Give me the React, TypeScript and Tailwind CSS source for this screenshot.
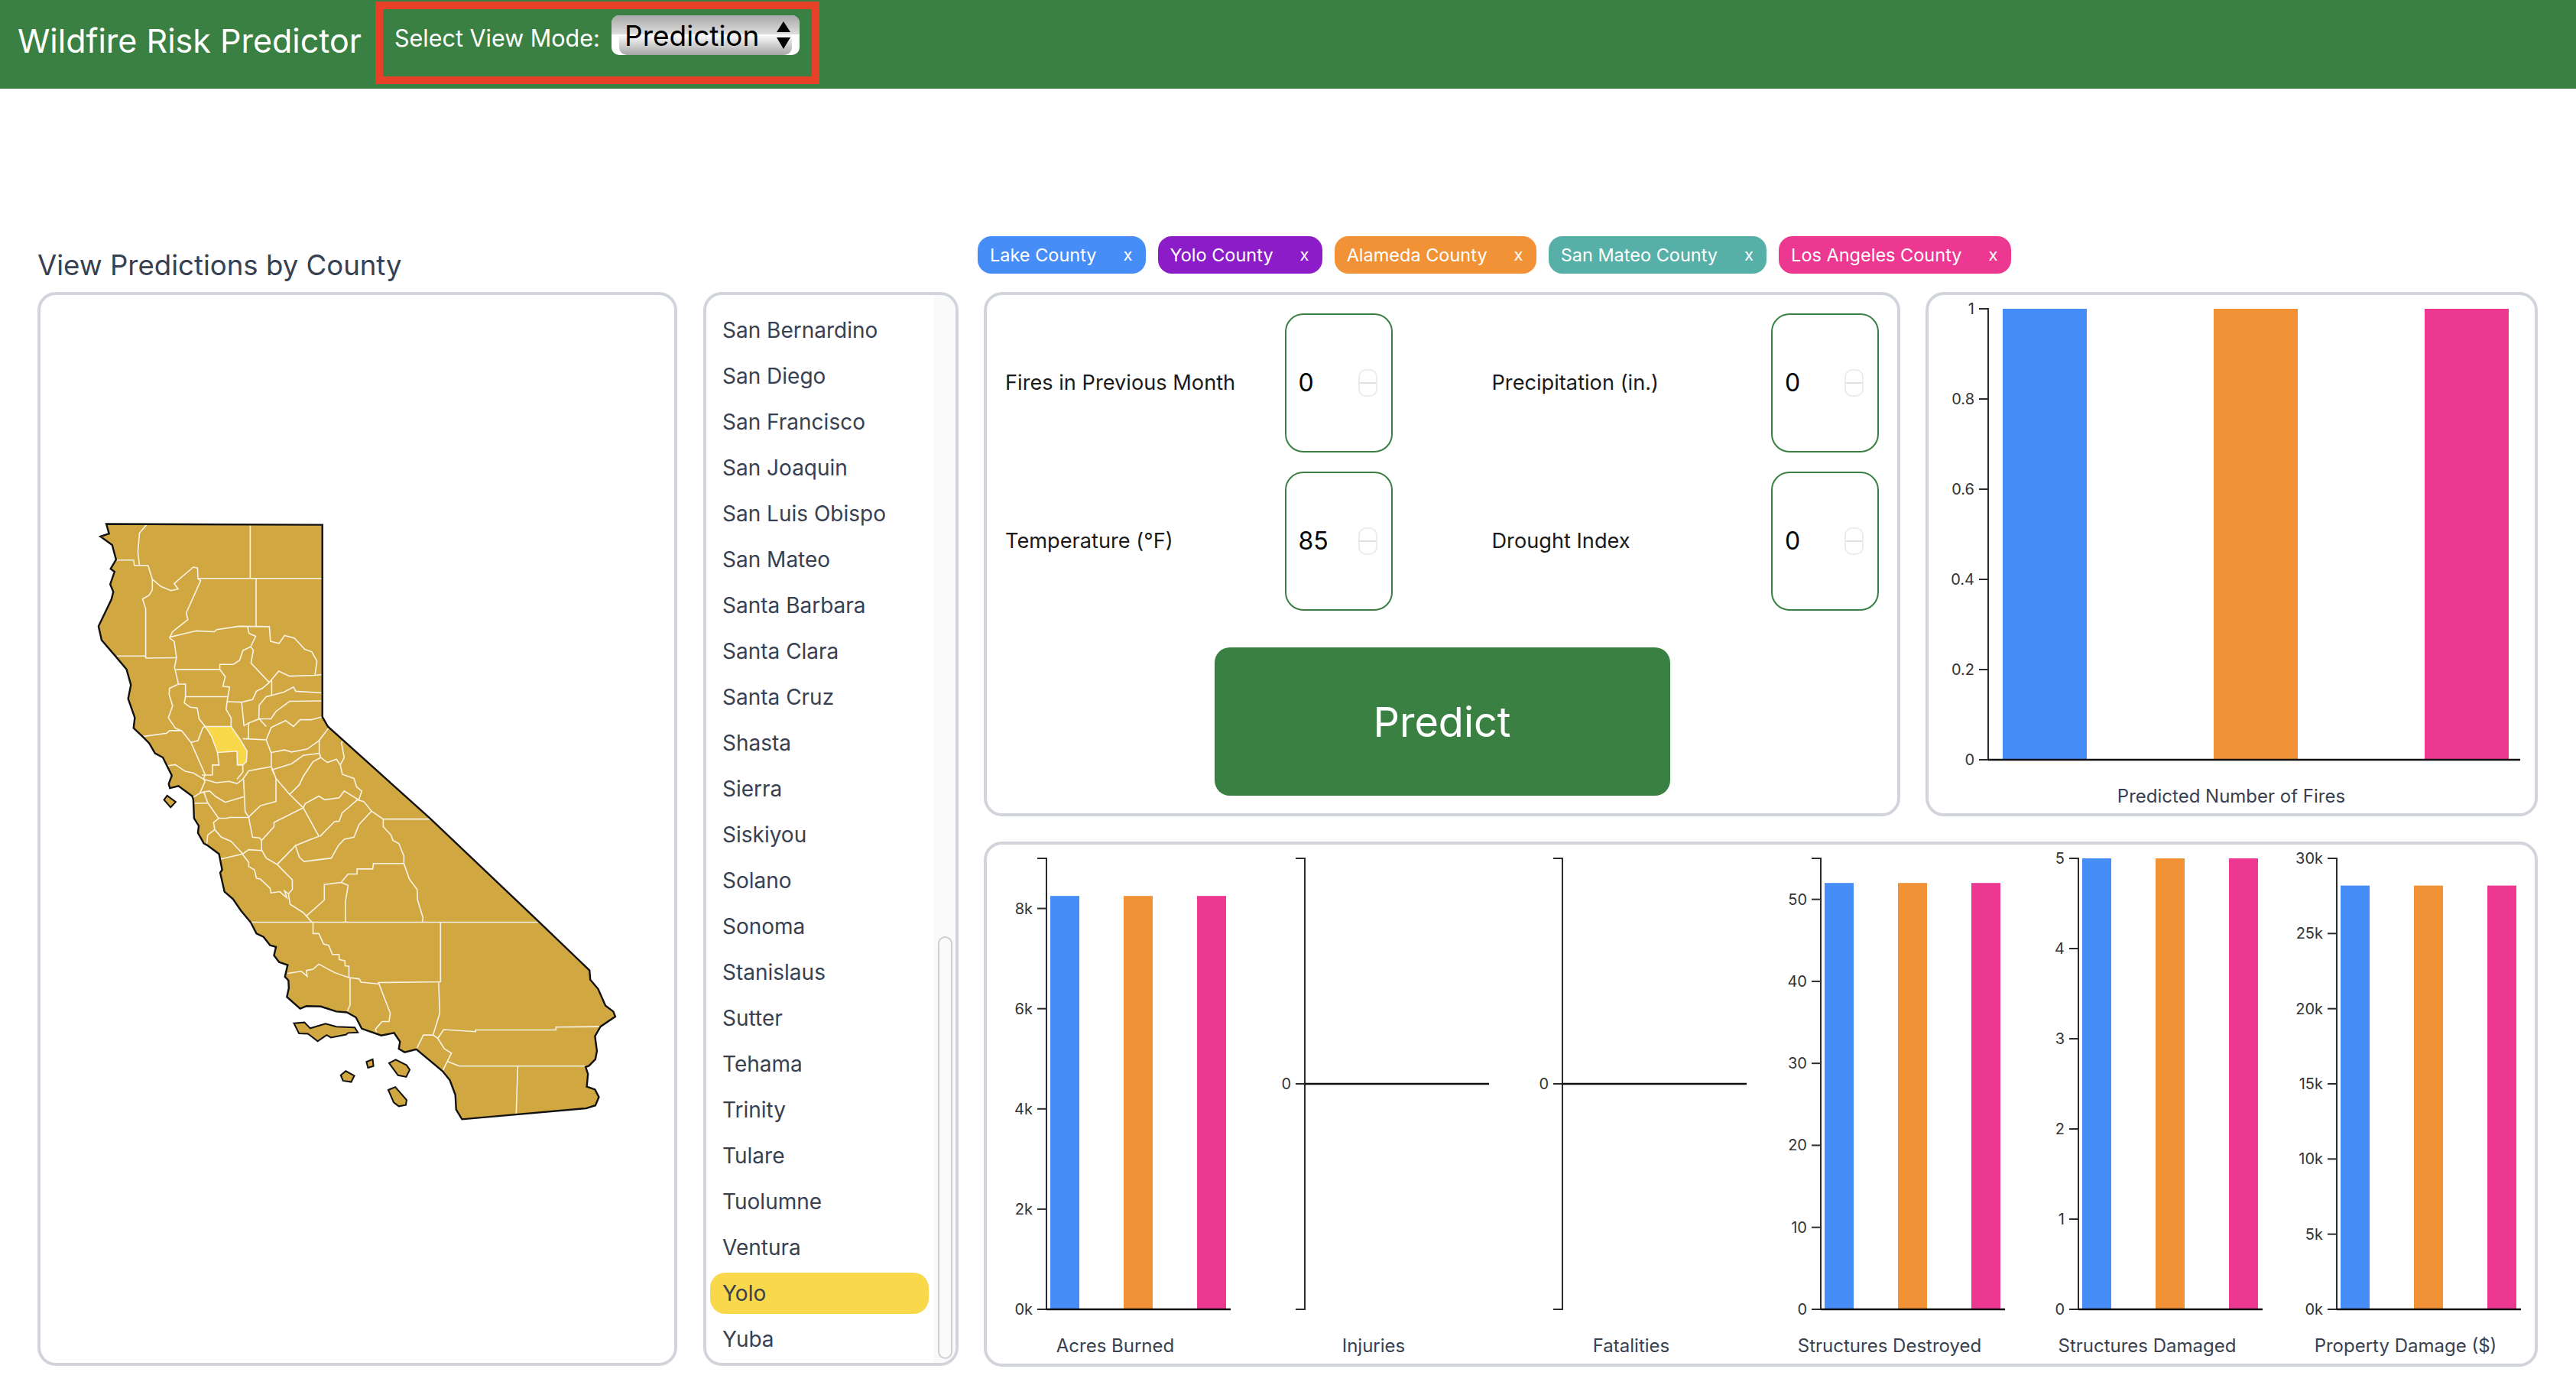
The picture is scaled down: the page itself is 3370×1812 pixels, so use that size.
const counties = [
  "San Bernardino", "San Diego", "San Francisco", "San Joaquin", "San Luis Obispo", "San Mateo",
  "Santa Barbara", "Santa Clara", "Santa Cruz", "Shasta", "Sierra", "Siskiyou", "Solano", "Sonoma",
  "Stanislaus", "Sutter", "Tehama", "Trinity", "Tulare", "Tuolumne", "Ventura", "Yolo", "Yuba",
];

const tags = [
  { name: "Lake County", color: "bg-[#468df8]" },
  { name: "Yolo County", color: "bg-[#8b1cc8]" },
  { name: "Alameda County", color: "bg-[#f29236]" },
  { name: "San Mateo County", color: "bg-[#56b0a8]" },
  { name: "Los Angeles County", color: "bg-[#ec3890]" },
];

const BLUE = "#468df8";
const ORANGE = "#f29236";
const PINK = "#ec3890";

const outline =
  "155,83 709,85 709,543 723,566 985,785 1262,1030 1394,1148 1396,1170 1416,1192 1435,1232 1455,1246 1460,1258 1422,1282 1408,1305 1413,1340 1409,1360 1392,1376 1384,1378 1390,1395 1387,1425 1408,1432 1418,1450 1409,1470 1385,1477 1067,1503 1052,1480 1050,1445 1036,1410 1017,1388 950,1336 920,1343 905,1335 908,1318 893,1297 860,1303 810,1287 795,1260 772,1248 745,1246 705,1234 668,1233 652,1239 618,1211 623,1190 622,1172 613,1163 620,1135 598,1128 585,1112 590,1092 575,1088 558,1068 540,1060 525,1033 500,1005 480,978 458,960 447,915 452,908 444,870 415,850 405,845 390,820 392,803 380,785 378,740 375,732 340,708 318,713 315,703 323,683 300,640 280,630 265,606 248,590 225,570 228,545 211,500 218,467 207,430 180,400 143,360 135,327 168,263 173,245 165,227 176,197 166,190 180,168 170,133 140,113 162,106";

const islands = [
  "303,741 311,731 333,746 320,759",
  "636,1274 663,1272 678,1286 717,1275 745,1282 792,1284 800,1296 775,1297 770,1301 731,1308 720,1302 697,1317 672,1299 649,1298",
  "822,1366 838,1360 840,1376 826,1380",
  "880,1369 897,1361 925,1374 933,1385 924,1402 903,1398",
  "756,1398 769,1388 791,1399 783,1414 762,1411",
  "878,1433 896,1426 925,1457 923,1469 905,1472 892,1463",
];

const yolo = "408,566 475,566 498,597 516,625 514,650 505,658 491,658 490,625 440,628 425,590 415,575";

const countyLines = [
  "258,85 240,105 236,150 240,182",
  "180,169 225,169 227,182 262,182 273,215 273,240 265,253 248,262 256,285 256,403",
  "182,398 256,398",
  "256,403 334,402",
  "273,215 295,232 321,242 339,238 329,225 378,186 389,188 390,214 397,218 360,295 364,311 325,340 317,355",
  "524,85 524,213",
  "390,213 708,213",
  "539,213 539,328",
  "317,353 385,338 432,340 438,335 495,327 573,328 576,363 598,368 612,349 637,355 664,382 682,388 695,410 690,444",
  "517,328 521,344 538,351 525,376 505,385 497,408 481,418 446,418 446,430",
  "317,355 329,363 335,402 330,425 340,465",
  "334,430 446,430 460,447 454,470 471,472 465,505 462,525 475,546 475,565",
  "525,376 532,384 526,415 573,461",
  "573,461 597,434 625,446 690,444 708,442",
  "573,461 555,475 540,482 530,502 502,508 465,507",
  "502,508 508,564 520,558 547,548 565,566",
  "579,455 579,492 565,495 547,515 546,548 577,548 590,530 625,506 708,505",
  "579,492 610,484 635,472 641,482 708,486",
  "357,495 466,495",
  "340,465 358,465 358,495 355,510 370,520 388,522 393,548 408,565",
  "340,465 317,475 316,490 325,517 314,545 332,570 348,576 372,604",
  "248,590 310,582 317,576 348,576",
  "372,604 390,600 402,570 408,565",
  "372,604 408,680 405,692",
  "440,628 444,658 427,658 427,682 400,682",
  "505,595 565,598 578,630 578,662 585,680",
  "520,558 519,595",
  "565,598 578,568 615,552 635,566 652,550 680,550 709,543",
  "725,570 700,600 670,620 630,627 612,622 578,628",
  "701,600 701,630 660,635 630,655 578,670",
  "701,630 705,640 722,652 745,644 755,658",
  "705,640 685,650 660,685 650,705 625,728 590,690 580,665",
  "578,662 520,672 505,692 490,702 470,697 437,700 405,692",
  "505,658 505,675 490,692",
  "310,660 332,657 357,673 378,677 405,692 408,697 395,725 378,735",
  "405,722 420,720 435,733 460,747 510,733",
  "507,692 511,770 520,782",
  "381,749 415,749",
  "395,725 405,722 415,748 443,785 430,795 433,812 415,825 413,845",
  "443,785 465,785 470,783 520,783 530,830 548,832 553,838",
  "433,812 450,830 475,840 490,855 505,870 520,860 553,862",
  "445,883 505,870",
  "520,782 550,755 590,745 590,690",
  "625,728 660,760 585,795 585,805 553,838 553,860 565,880 593,895 630,860 640,850 680,835 700,828 660,760",
  "660,760 665,750 700,732 715,741 752,736 765,720 800,740 760,772 752,792 740,793 703,828",
  "755,658 765,640 758,605 762,600",
  "755,658 760,680 790,690 797,710 810,720 802,742 815,745 835,768 865,787 985,787",
  "835,768 803,800 790,830 765,835 750,850 732,880 662,888 650,878 640,850",
  "865,787 865,805 885,825 890,838 905,845 918,875 918,893 932,930 952,955 953,980 967,1022 965,1033",
  "918,893 840,893 838,906 798,906 798,918 775,918 757,938 714,943 714,980 668,1018",
  "757,938 775,945 768,985 768,1033",
  "593,895 632,932 632,955 622,965 612,958 618,975 600,960 577,963 575,952 550,930 540,928 535,908 520,900 520,890 505,872",
  "622,965 626,990 660,1010 682,1033",
  "525,1033 1262,1033",
  "685,1033 685,1060 700,1060 712,1085 725,1088 735,1110 752,1110 752,1122 767,1125 767,1137 777,1138 777,1165",
  "620,1155 655,1150 670,1162 668,1148 685,1145 700,1133 740,1153 777,1165 803,1168 808,1176 853,1180",
  "1012,1033 1012,1175 853,1177 883,1250 880,1270 862,1270 845,1288 848,1295",
  "780,1165 780,1230 772,1248",
  "1007,1175 1010,1250 993,1302",
  "1422,1282 1308,1283 1308,1290 1102,1290 1102,1294 1020,1289 1005,1310",
  "950,1336 968,1302 993,1302 1005,1310 1022,1335 1040,1345 1017,1388",
  "1030,1365 1060,1376 1384,1376",
  "1210,1376 1206,1490",
];

const CaliforniaMap = () => (
  <svg width={800} height={860} viewBox="0 0 1568 1568" preserveAspectRatio="none">
    <polygon points={outline} fill="#d1a742" />
    {islands.map((points) => (
      <polygon key={points} points={points} fill="#d1a742" stroke="#111" strokeWidth={2} vectorEffect="non-scaling-stroke" />
    ))}
    <polygon points={yolo} fill="#f9d84a" />
    {countyLines.map((points) => (
      <polyline key={points} points={points} fill="none" stroke="#f8f3e4" strokeWidth={1.6} vectorEffect="non-scaling-stroke" />
    ))}
    <polygon points={yolo} fill="#f9d84a" stroke="#f8f3e4" strokeWidth={1.6} vectorEffect="non-scaling-stroke" />
    <polygon points={outline} fill="none" stroke="#111" strokeWidth={2.4} vectorEffect="non-scaling-stroke" />
  </svg>
);

type BarChartProps = {
  title: string;
  width: number;
  min?: number;
  max: number;
  ticks: [number, string][];
  value?: number;
  axisLength?: number;
  barOffsets?: number[];
  barWidth?: number;
  titleX?: number;
};

const BarChart = ({
  title,
  width,
  min = 0,
  max,
  ticks,
  value,
  axisLength = 241,
  barOffsets = [5, 101, 197],
  barWidth = 38,
  titleX = 168,
}: BarChartProps) => {
  const axis = 78;
  const top = 18;
  const bottom = 608;
  const yAt = (v: number) => bottom - ((v - min) / (max - min)) * (bottom - top);
  const colors = [BLUE, ORANGE, PINK];

  return (
    <svg width={width} height={678} className="block shrink-0">
      {value !== undefined &&
        barOffsets.map((offset, i) => (
          <rect key={offset} x={axis + offset} y={yAt(value)} width={barWidth} height={bottom - yAt(value)} fill={colors[i]} />
        ))}
      <path d={`M${axis - 12},${top}H${axis}V${bottom}H${axis - 12}`} fill="none" stroke="#2b2b2b" strokeWidth={2} />
      <line x1={axis} x2={axis + axisLength} y1={yAt(0)} y2={yAt(0)} stroke="#111" strokeWidth={2.5} />
      {ticks.map(([v, label]) => (
        <g key={label}>
          <line x1={axis - 12} x2={axis} y1={yAt(v)} y2={yAt(v)} stroke="#2b2b2b" strokeWidth={2} />
          <text x={axis - 18} y={yAt(v)} textAnchor="end" dominantBaseline="central" fontSize={20} fill="#333">
            {label}
          </text>
        </g>
      ))}
      <text x={titleX} y={655} textAnchor="middle" dominantBaseline="central" fontSize={24} fill="#374151">
        {title}
      </text>
    </svg>
  );
};

const NumberField = ({ label, value }: { label: string; value: string }) => (
  <div className="flex items-center justify-between">
    <label className="pt-[1px] text-[27.2px] text-[#1a1a1a]">{label}</label>
    <div className="flex h-[182px] w-[141px] items-center justify-between rounded-[24px] border-2 border-[#3a8043] pl-[16px] pr-[18px]">
      <input readOnly value={value} className="w-[70px] text-[32px] text-black outline-none" />
      <div className="flex h-[36px] w-[25px] flex-col overflow-hidden rounded-[10px] border-2 border-[#ececec]">
        <div className="flex-1 border-b-2 border-[#e0e0e0]" />
        <div className="flex-1" />
      </div>
    </div>
  </div>
);

const App = () => {
  return (
    <div className="min-h-[1812px] bg-white font-[family-name:Inter]">
      <header className="flex h-[116px] items-start bg-[#3a8043] text-white">
        <h1 className="ml-[23px] mt-[23px] w-[468px] whitespace-nowrap text-[43px] leading-[60px]">Wildfire Risk Predictor</h1>
        <div className="mt-[2px] flex h-[108px] w-[581px] items-start border-[10px] border-[#e8412a] pl-[15px] pt-[8px]">
          <span className="mt-[10px] w-[266px] whitespace-nowrap text-[30.5px] leading-[40px]">Select View Mode:</span>
          <div className="relative ml-[18px] h-[52px] w-[246px] overflow-hidden rounded-[10px] bg-white text-black">
            <div className="h-[25px] bg-gradient-to-b from-[#a8a8a8] to-[#dedede]" />
            <div className="mx-[10px] h-[27px] rounded-b-[10px] bg-gradient-to-b from-white to-[#a6a6a6]" />
            <span className="absolute left-[17px] top-[3px] text-[37px] leading-[48px]">Prediction</span>
            <svg className="absolute left-[216px] top-[8px]" width={18} height={36} viewBox="0 0 18 36">
              <polygon points="9,0 18,14 0,14" fill="#000" />
              <polygon points="0,21 18,21 9,36" fill="#000" />
            </svg>
          </div>
        </div>
      </header>

      <main className="flex gap-[25px] pl-[49px] pr-[50px] pt-[193px]">
        <section className="w-[1205px]">
          <h2 className="h-[73px] pt-[13px] text-[36.6px] leading-[50px] text-[#374151]">View Predictions by County</h2>
          <div className="flex gap-[34px]">
            <div className="h-[1405px] w-[837px] rounded-[24px] border-4 border-[#d1d5db] pl-[7px] pt-[254px]">
              <CaliforniaMap />
            </div>
            <div className="flex h-[1405px] w-[334px] overflow-hidden rounded-[24px] border-4 border-[#d1d5db]">
              <ul className="w-[291px] pl-[5px] pt-[19px]">
                {counties.map((county) => (
                  <li
                    key={county}
                    className={
                      county === "Yolo"
                        ? "mb-[6px] flex h-[54px] items-center rounded-[20px] bg-[#fad84b] pl-[16px] text-[28px] text-[#374151]"
                        : "mb-[6px] flex h-[54px] items-center pl-[16px] text-[28px] text-[#374151]"
                    }
                  >
                    {county}
                  </li>
                ))}
              </ul>
              <div className="ml-[6px] flex-1 bg-[#fafafa] pb-[5px] pl-[6px] pr-[4px] pt-[839px]">
                <div className="h-full rounded-full border-2 border-[#cfcfcf]" />
              </div>
            </div>
          </div>
        </section>

        <section className="flex-1">
          <div className="flex h-[73px] items-start gap-[16px]">
            {tags.map((tag) => (
              <div
                key={tag.name}
                className={`flex h-[49px] items-center justify-between gap-[35px] rounded-[18px] pl-[16px] pr-[17px] text-[23.5px] text-white ${tag.color}`}
              >
                <span>{tag.name}</span>
                <span className="text-[22px]">x</span>
              </div>
            ))}
          </div>

          <div className="ml-[8px] flex gap-[33px]">
            <div className="h-[686px] w-[1199px] rounded-[24px] border-4 border-[#d1d5db] px-[24px] pt-[24px]">
              <div className="grid grid-cols-2 gap-x-[130px] gap-y-[25px]">
                <NumberField label="Fires in Previous Month" value="0" />
                <NumberField label="Precipitation (in.)" value="0" />
                <NumberField label="Temperature (°F)" value="85" />
                <NumberField label="Drought Index" value="0" />
              </div>
              <button className="mx-auto mt-[48px] flex h-[194px] w-[596px] items-center justify-center rounded-[20px] bg-[#3a8043] text-[54px] text-white">
                Predict
              </button>
            </div>
            <div className="h-[686px] flex-1 rounded-[24px] border-4 border-[#d1d5db]">
              <BarChart
                title="Predicted Number of Fires"
                width={793}
                max={1}
                ticks={[[0, "0"], [0.2, "0.2"], [0.4, "0.4"], [0.6, "0.6"], [0.8, "0.8"], [1, "1"]]}
                value={1}
                axisLength={696}
                barOffsets={[19, 295, 571]}
                barWidth={110}
                titleX={396}
              />
            </div>
          </div>

          <div className="ml-[8px] mt-[33px] grid h-[687px] grid-cols-6 rounded-[24px] border-4 border-[#d1d5db]">
            <BarChart title="Acres Burned" width={337} max={9000} value={8250} ticks={[[0, "0k"], [2000, "2k"], [4000, "4k"], [6000, "6k"], [8000, "8k"]]} />
            <BarChart title="Injuries" width={337} min={-1} max={1} ticks={[[0, "0"]]} />
            <BarChart title="Fatalities" width={337} min={-1} max={1} ticks={[[0, "0"]]} />
            <BarChart title="Structures Destroyed" width={337} max={55} value={52} ticks={[[0, "0"], [10, "10"], [20, "20"], [30, "30"], [40, "40"], [50, "50"]]} />
            <BarChart title="Structures Damaged" width={337} max={5} value={5} ticks={[[0, "0"], [1, "1"], [2, "2"], [3, "3"], [4, "4"], [5, "5"]]} />
            <BarChart title="Property Damage ($)" width={337} max={30000} value={28190} ticks={[[0, "0k"], [5000, "5k"], [10000, "10k"], [15000, "15k"], [20000, "20k"], [25000, "25k"], [30000, "30k"]]} />
          </div>
        </section>
      </main>
    </div>
  );
};

export default App;
